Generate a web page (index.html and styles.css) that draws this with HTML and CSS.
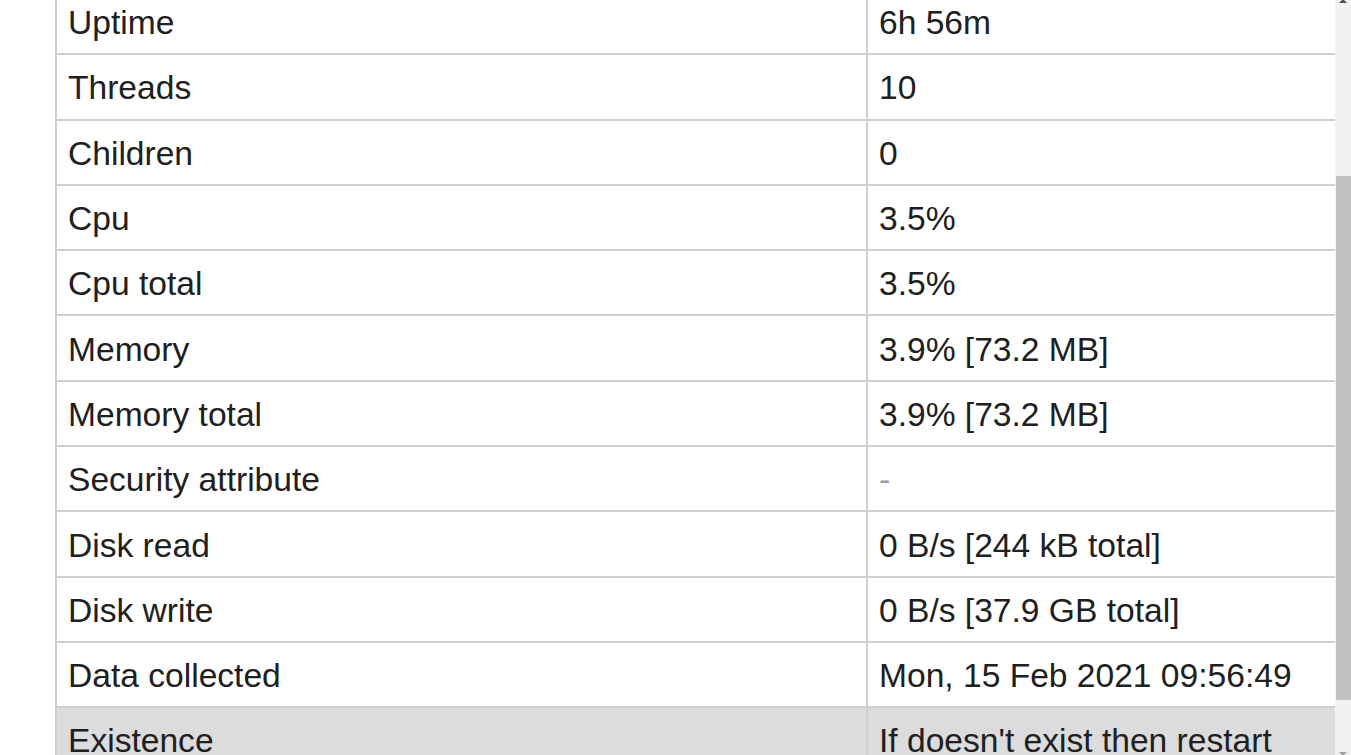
FILE: index.html
```html
<!DOCTYPE html>
<html lang="en">
<head>
<meta charset="utf-8">
<title>Process status</title>
<link rel="stylesheet" href="styles.css">
</head>
<body>
<div class="viewport">
  <main class="page">
    <table class="info">
      <tbody>
        <tr><td class="key">Uptime</td><td>6h 56m</td></tr>
        <tr><td class="key">Threads</td><td>10</td></tr>
        <tr><td class="key">Children</td><td>0</td></tr>
        <tr><td class="key">Cpu</td><td>3.5%</td></tr>
        <tr><td class="key">Cpu total</td><td>3.5%</td></tr>
        <tr><td class="key">Memory</td><td>3.9% [73.2 MB]</td></tr>
        <tr><td class="key">Memory total</td><td>3.9% [73.2 MB]</td></tr>
        <tr><td class="key">Security attribute</td><td class="empty">-</td></tr>
        <tr><td class="key">Disk read</td><td>0 B/s [244 kB total]</td></tr>
        <tr><td class="key">Disk write</td><td>0 B/s [37.9 GB total]</td></tr>
        <tr><td class="key">Data collected</td><td>Mon, 15 Feb 2021 09:56:49</td></tr>
        <tr class="rule"><td class="key">Existence</td><td>If doesn't exist then restart</td></tr>
      </tbody>
    </table>
  </main>
  <div class="scrollbar">
    <span class="arrow arrow-up"></span>
    <div class="thumb"></div>
    <span class="arrow arrow-down"></span>
  </div>
</div>
</body>
</html>
```

FILE: styles.css
```css
html, body {
  margin: 0;
  padding: 0;
  background: #ffffff;
}

body {
  font-family: "Liberation Sans", Arial, sans-serif;
  color: #202020;
}

.viewport {
  display: flex;
  height: 755px;
  overflow: hidden;
}

.page {
  flex: 1;
  overflow: hidden;
  padding-left: 55px;
}

.info {
  border-collapse: collapse;
  width: 1320px;
  margin-top: -12px;
  font-size: 33.6px;
  table-layout: fixed;
}

.info tr {
  height: 65.3px;
}

.info td {
  border: 2px solid #d0d0d0;
  padding: 3px 11px 0;
  vertical-align: middle;
  white-space: nowrap;
  line-height: 38px;
}

.info td.key {
  width: 787px;
}

.info td.empty {
  color: #9a9a9a;
}

.info tr.rule td {
  background: #dcdcdc;
}

.scrollbar {
  position: relative;
  width: 16px;
  flex: 0 0 16px;
  background: #f1f1f1;
}

.thumb {
  margin-top: 176px;
  margin-left: 1px;
  height: 524px;
  background: #c1c1c1;
}

.arrow {
  position: absolute;
  left: 4px;
  width: 0;
  height: 0;
  border-left: 4px solid transparent;
  border-right: 4px solid transparent;
}

.arrow-up {
  top: -1px;
  border-bottom: 4px solid #505050;
}

.arrow-down {
  bottom: -1px;
  border-top: 4px solid #a3a3a3;
}
```
